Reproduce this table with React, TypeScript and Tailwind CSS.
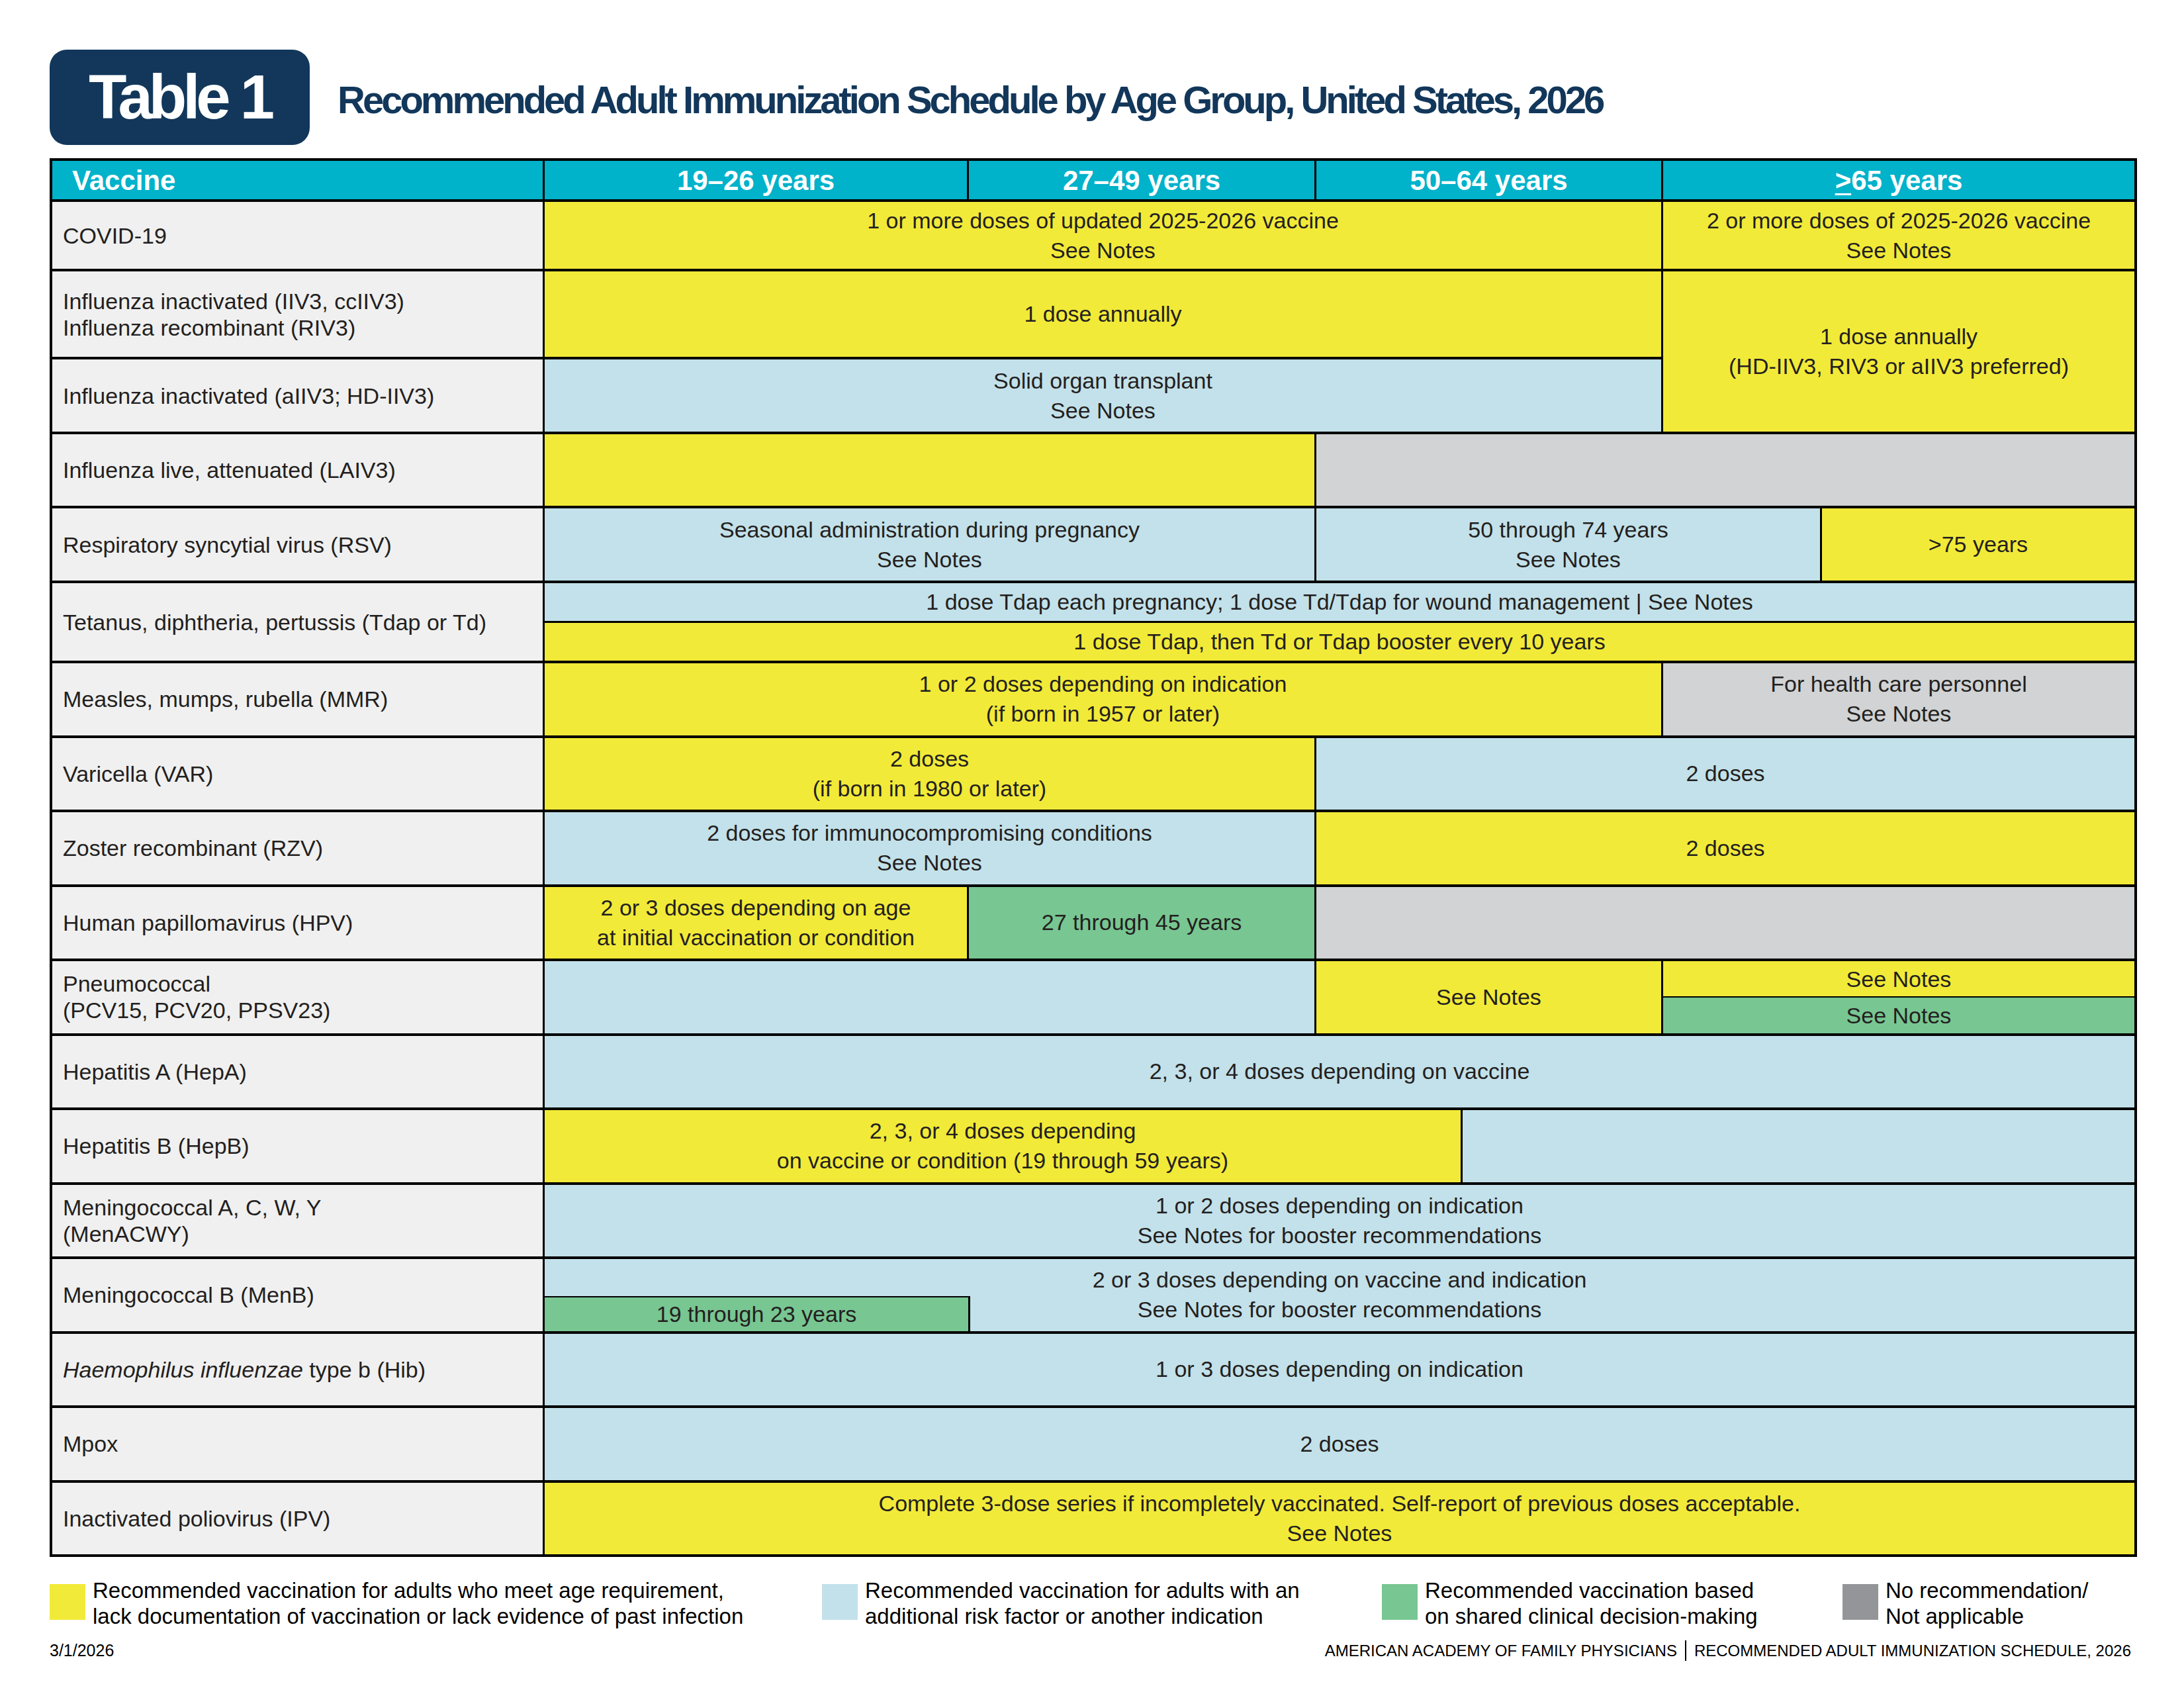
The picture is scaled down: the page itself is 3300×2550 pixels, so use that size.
import type { ReactNode } from 'react';

const YEL = 'bg-[#f2ea38]';
const BLU = 'bg-[#c3e1ea]';
const GRY = 'bg-[#d1d3d4]';
const GRN = 'bg-[#78c692]';

const ROWS = [
    '',
    'row-start-1',
    'row-start-2',
    'row-start-3',
    'row-start-4',
    'row-start-5',
    'row-start-6',
    'row-start-7',
    'row-start-8',
    'row-start-9',
    'row-start-10',
    'row-start-11',
    'row-start-12',
    'row-start-13',
    'row-start-14',
    'row-start-15',
    'row-start-16',
    'row-start-17',
    'row-start-18',
    'row-start-19',
];
const COLS = ['', 'col-start-1', 'col-start-2', 'col-start-3', 'col-start-4', 'col-start-5', 'col-start-6', 'col-start-7'];
const SPANS = ['', 'col-span-1', 'col-span-2', 'col-span-3', 'col-span-4', 'col-span-5', 'col-span-6'];

function Name({ r, children }: { r: number; children: ReactNode }) {
    return (
        <div className={`${ROWS[r]} col-start-1 flex flex-col justify-center bg-[#f0f0f0] pl-[16px] text-[34px] leading-[40px] text-[#231f20]`}>
            {children}
        </div>
    );
}

function Cell({
    r,
    c,
    span = 1,
    tall = false,
    bg,
    children,
}: {
    r: number;
    c: number;
    span?: number;
    tall?: boolean;
    bg: string;
    children?: ReactNode;
}) {
    return (
        <div
            className={`${ROWS[r]} ${COLS[c]} ${SPANS[span]} ${tall ? 'row-span-2' : ''} ${bg} flex flex-col items-center justify-center text-center text-[34px] leading-[45px] text-[#231f20]`}
        >
            {children}
        </div>
    );
}

function Head({ c, span = 1, children }: { c: number; span?: number; children: ReactNode }) {
    return (
        <div className={`row-start-1 ${COLS[c]} ${SPANS[span]} flex items-center justify-center bg-[#00b2ca] text-[42px] font-bold text-white`}>
            {children}
        </div>
    );
}

function Legend({ color, children }: { color: string; children: ReactNode }) {
    return (
        <div className="flex items-start gap-[11px]">
            <div className={`mt-[10px] h-[54px] w-[54px] shrink-0 ${color}`} />
            <div className="text-[33px] leading-[39px] text-black">{children}</div>
        </div>
    );
}

export default function App() {
    return (
        <div className="h-[2550px] w-[3300px] bg-white pl-[75px] pt-[75px] font-['Liberation_Sans',Arial,sans-serif]">
            {/* title */}
            <div className="flex h-[144px] items-center">
                <div className="flex h-[144px] w-[393px] items-center justify-center rounded-[26px] bg-[#12375a]">
                    <span className="text-[94px] font-bold leading-none tracking-[-6px] text-white">Table 1</span>
                </div>
                <h1 className="ml-[42px] pt-[8px] text-[58px] font-bold leading-none tracking-[-4px] text-[#12375a]">
                    Recommended Adult Immunization Schedule by Age Group, United States, 2026
                </h1>
            </div>

            {/* schedule grid */}
            <div className="mt-[20px] grid w-[3154px] grid-cols-[741px_638px_522px_218px_300px_237px_472px] grid-rows-[58px_101px_129px_109px_108px_109px_117px_repeat(12,108.5px)] gap-x-[3px] gap-y-[4px] border-4 border-black bg-black">
                <div className="row-start-1 col-start-1 flex items-center bg-[#00b2ca] pl-[30px] text-[42px] font-bold text-white">Vaccine</div>
                <Head c={2}>19–26 years</Head>
                <Head c={3}>27–49 years</Head>
                <Head c={4} span={2}>50–64 years</Head>
                <Head c={6} span={2}>
                    <span>
                        <span className="underline decoration-[3px] underline-offset-[5px]">&gt;</span>65 years
                    </span>
                </Head>

                <Name r={2}>COVID-19</Name>
                <Cell r={2} c={2} span={4} bg={YEL}>
                    <span>1 or more doses of updated 2025-2026 vaccine</span>
                    <span>See Notes</span>
                </Cell>
                <Cell r={2} c={6} span={2} bg={YEL}>
                    <span>2 or more doses of 2025-2026 vaccine</span>
                    <span>See Notes</span>
                </Cell>

                <Name r={3}>
                    <span>Influenza inactivated (IIV3, ccIIV3)</span>
                    <span>Influenza recombinant (RIV3)</span>
                </Name>
                <Cell r={3} c={2} span={4} bg={YEL}>1 dose annually</Cell>
                <Cell r={3} c={6} span={2} tall bg={YEL}>
                    <span>1 dose annually</span>
                    <span>(HD-IIV3, RIV3 or aIIV3 preferred)</span>
                </Cell>

                <Name r={4}>Influenza inactivated (aIIV3; HD-IIV3)</Name>
                <Cell r={4} c={2} span={4} bg={BLU}>
                    <span>Solid organ transplant</span>
                    <span>See Notes</span>
                </Cell>

                <Name r={5}>Influenza live, attenuated (LAIV3)</Name>
                <Cell r={5} c={2} span={2} bg={YEL} />
                <Cell r={5} c={4} span={4} bg={GRY} />

                <Name r={6}>Respiratory syncytial virus (RSV)</Name>
                <Cell r={6} c={2} span={2} bg={BLU}>
                    <span>Seasonal administration during pregnancy</span>
                    <span>See Notes</span>
                </Cell>
                <Cell r={6} c={4} span={3} bg={BLU}>
                    <span>50 through 74 years</span>
                    <span>See Notes</span>
                </Cell>
                <Cell r={6} c={7} bg={YEL}>&gt;75 years</Cell>

                <Name r={7}>Tetanus, diphtheria, pertussis (Tdap or Td)</Name>
                <div className="row-start-7 col-start-2 col-span-6 flex flex-col gap-[3px] text-center text-[34px] leading-[45px] text-[#231f20]">
                    <div className={`flex flex-1 items-center justify-center ${BLU}`}>
                        1 dose Tdap each pregnancy; 1 dose Td/Tdap for wound management | See Notes
                    </div>
                    <div className={`flex flex-1 items-center justify-center ${YEL}`}>
                        1 dose Tdap, then Td or Tdap booster every 10 years
                    </div>
                </div>

                <Name r={8}>Measles, mumps, rubella (MMR)</Name>
                <Cell r={8} c={2} span={4} bg={YEL}>
                    <span>1 or 2 doses depending on indication</span>
                    <span>(if born in 1957 or later)</span>
                </Cell>
                <Cell r={8} c={6} span={2} bg={GRY}>
                    <span>For health care personnel</span>
                    <span>See Notes</span>
                </Cell>

                <Name r={9}>Varicella (VAR)</Name>
                <Cell r={9} c={2} span={2} bg={YEL}>
                    <span>2 doses</span>
                    <span>(if born in 1980 or later)</span>
                </Cell>
                <Cell r={9} c={4} span={4} bg={BLU}>2 doses</Cell>

                <Name r={10}>Zoster recombinant (RZV)</Name>
                <Cell r={10} c={2} span={2} bg={BLU}>
                    <span>2 doses for immunocompromising conditions</span>
                    <span>See Notes</span>
                </Cell>
                <Cell r={10} c={4} span={4} bg={YEL}>2 doses</Cell>

                <Name r={11}>Human papillomavirus (HPV)</Name>
                <Cell r={11} c={2} bg={YEL}>
                    <span>2 or 3 doses depending on age</span>
                    <span>at initial vaccination or condition</span>
                </Cell>
                <Cell r={11} c={3} bg={GRN}>27 through 45 years</Cell>
                <Cell r={11} c={4} span={4} bg={GRY} />

                <Name r={12}>
                    <span>Pneumococcal</span>
                    <span>(PCV15, PCV20, PPSV23)</span>
                </Name>
                <Cell r={12} c={2} span={2} bg={BLU} />
                <Cell r={12} c={4} span={2} bg={YEL}>See Notes</Cell>
                <div className="row-start-12 col-start-6 col-span-2 flex flex-col gap-[2px] text-center text-[34px] leading-[40px] text-[#231f20]">
                    <div className={`flex flex-1 items-center justify-center ${YEL}`}>See Notes</div>
                    <div className={`flex flex-1 items-center justify-center ${GRN}`}>See Notes</div>
                </div>

                <Name r={13}>Hepatitis A (HepA)</Name>
                <Cell r={13} c={2} span={6} bg={BLU}>2, 3, or 4 doses depending on vaccine</Cell>

                <Name r={14}>Hepatitis B (HepB)</Name>
                <Cell r={14} c={2} span={3} bg={YEL}>
                    <span>2, 3, or 4 doses depending</span>
                    <span>on vaccine or condition (19 through 59 years)</span>
                </Cell>
                <Cell r={14} c={5} span={3} bg={BLU} />

                <Name r={15}>
                    <span>Meningococcal A, C, W, Y</span>
                    <span>(MenACWY)</span>
                </Name>
                <Cell r={15} c={2} span={6} bg={BLU}>
                    <span>1 or 2 doses depending on indication</span>
                    <span>See Notes for booster recommendations</span>
                </Cell>

                <Name r={16}>Meningococcal B (MenB)</Name>
                <Cell r={16} c={2} span={6} bg={BLU}>
                    <span>2 or 3 doses depending on vaccine and indication</span>
                    <span>See Notes for booster recommendations</span>
                </Cell>
                <div className={`row-start-16 col-start-2 flex h-[53px] w-[643px] items-center justify-center self-end border-t-2 border-r-[3px] border-black ${GRN} text-[34px] text-[#231f20]`}>
                    19 through 23 years
                </div>

                <Name r={17}>
                    <span>
                        <i>Haemophilus influenzae</i> type b (Hib)
                    </span>
                </Name>
                <Cell r={17} c={2} span={6} bg={BLU}>1 or 3 doses depending on indication</Cell>

                <Name r={18}>Mpox</Name>
                <Cell r={18} c={2} span={6} bg={BLU}>2 doses</Cell>

                <Name r={19}>Inactivated poliovirus (IPV)</Name>
                <Cell r={19} c={2} span={6} bg={YEL}>
                    <span>Complete 3-dose series if incompletely vaccinated. Self-report of previous doses acceptable.</span>
                    <span>See Notes</span>
                </Cell>
            </div>

            {/* legend */}
            <div className="mt-[31px] grid w-[3154px] grid-cols-[1167px_846px_696px_1fr]">
                <Legend color={YEL}>
                    Recommended vaccination for adults who meet age requirement,
                    <br />
                    lack documentation of vaccination or lack evidence of past infection
                </Legend>
                <Legend color={BLU}>
                    Recommended vaccination for adults with an
                    <br />
                    additional risk factor or another indication
                </Legend>
                <Legend color={GRN}>
                    Recommended vaccination based
                    <br />
                    on shared clinical decision-making
                </Legend>
                <Legend color="bg-[#949598]">
                    No recommendation/
                    <br />
                    Not applicable
                </Legend>
            </div>

            {/* footer */}
            <div className="mt-[17px] flex w-[3154px] items-baseline justify-between pr-[9px] text-black">
                <span className="text-[25px] leading-none">3/1/2026</span>
                <span className="flex items-center text-[24px] uppercase leading-none">
                    American Academy of Family Physicians
                    <span className="mx-[12px] inline-block h-[31px] w-[2px] bg-black" />
                    Recommended Adult Immunization Schedule, 2026
                </span>
            </div>
        </div>
    );
}
